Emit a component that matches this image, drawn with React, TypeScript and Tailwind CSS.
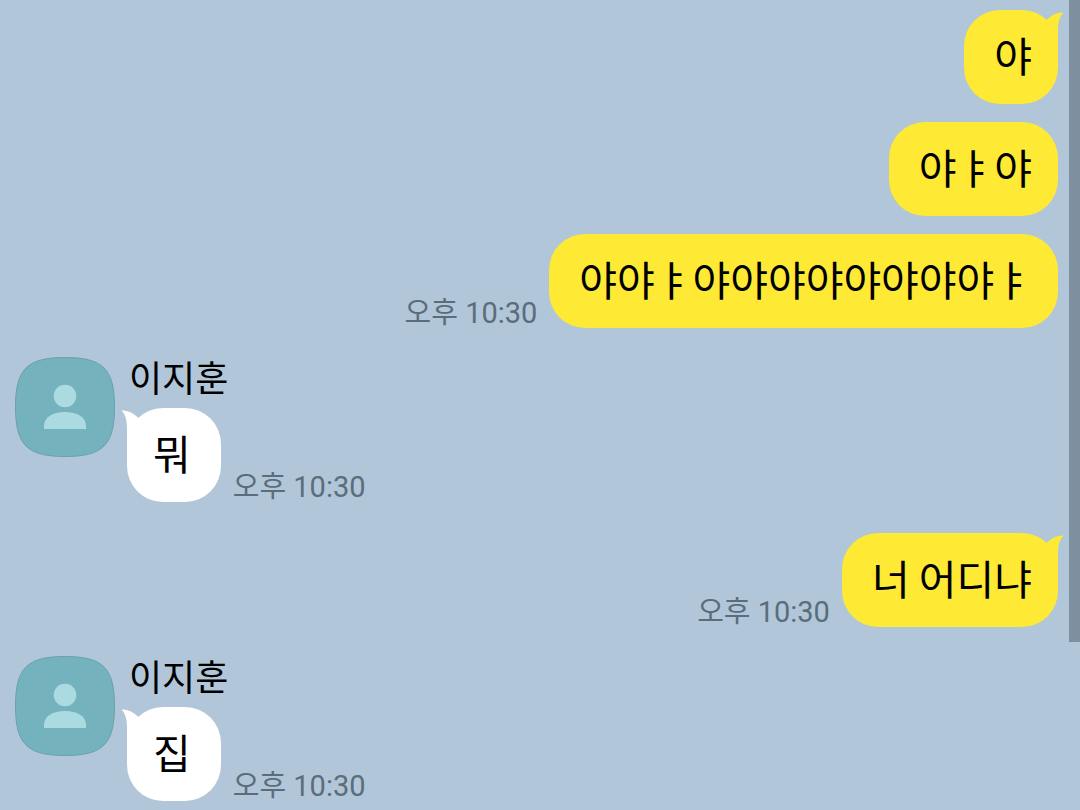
type Message = {
  text: string;
  time?: string;
};

type MessageGroup = {
  id: number;
  sender: string | null;
  messages: Message[];
};

const GROUPS: MessageGroup[] = [
  {
    id: 1,
    sender: null,
    messages: [
      { text: "야" },
      { text: "야ㅑ야" },
      { text: "야야ㅑ야야야야야야야야ㅑ", time: "오후 10:30" },
    ],
  },
  { id: 2, sender: "이지훈", messages: [{ text: "뭐", time: "오후 10:30" }] },
  { id: 3, sender: null, messages: [{ text: "너 어디냐", time: "오후 10:30" }] },
  { id: 4, sender: "이지훈", messages: [{ text: "집", time: "오후 10:30" }] },
];

function Avatar() {
  return (
    <svg viewBox="0 0 100 100" className="size-[100px] shrink-0" aria-hidden="true">
      <path
        d="M50 .5C88 .5 99.5 12 99.5 50S88 99.5 50 99.5.5 88 .5 50 12 .5 50 .5Z"
        fill="#74b3be"
        stroke="#6ba0ad"
        strokeWidth="1"
      />
      <circle cx="50" cy="39" r="11.3" fill="#abdbe0" />
      <path d="M29 72V69C29 60 38 55 50 55s21 5 21 14v3Z" fill="#abdbe0" />
    </svg>
  );
}

function Tail({ mine }: { mine: boolean }) {
  return (
    <svg
      viewBox="0 0 24 36"
      className={
        mine
          ? "absolute top-0 -right-1.5 w-6 h-9 text-[#fee934]"
          : "absolute top-0 -left-1.5 w-6 h-9 -scale-x-100 text-white"
      }
      aria-hidden="true"
    >
      <path d="M4 14L7 9.500C12 5 17 2.500 23.500 2.500C20 6 18 12 18 20V36L8 24Z" fill="currentColor" />
    </svg>
  );
}

function Bubble({ message, mine, tail }: { message: Message; mine: boolean; tail: boolean }) {
  return (
    <div className={`flex items-end gap-3 ${mine ? "flex-row-reverse" : ""}`}>
      <div
        className={`relative rounded-[36px] pt-[14px] pb-[20px] text-[41px] leading-[60px] text-black ${
          mine ? "bg-[#fee934] pl-[30px] pr-[26px]" : "bg-white pl-[26px] pr-[30px]"
        }`}
      >
        {tail && <Tail mine={mine} />}
        <p>{message.text}</p>
      </div>
      {message.time && (
        <time className="shrink-0 font-[Roboto,'Noto_Sans_CJK_KR',sans-serif] text-[29px] leading-[30px] text-[#5b6d7a]">
          {message.time}
        </time>
      )}
    </div>
  );
}

function Group({ group }: { group: MessageGroup }) {
  const mine = group.sender === null;
  const bubbles = group.messages.map((message, i) => (
    <Bubble key={i} message={message} mine={mine} tail={i === 0} />
  ));

  if (mine) {
    return <li className="flex flex-col items-end gap-[18px] pr-[22px]">{bubbles}</li>;
  }

  return (
    <li className="flex items-start gap-3 pl-[15px] pb-0.5">
      <Avatar />
      <div className="flex flex-col items-start gap-[13px]">
        <h2 className="pl-[2px] text-[36px] leading-[38px] text-black">{group.sender}</h2>
        {bubbles}
      </div>
    </li>
  );
}

export default function App() {
  return (
    <main className="relative min-h-screen bg-[#b1c6d9] font-['Noto_Sans_CJK_KR',sans-serif]">
      <ol className="flex flex-col gap-[29px] pt-2.5 pb-1.5">
        {GROUPS.map((group) => (
          <Group key={group.id} group={group} />
        ))}
      </ol>
      <div className="absolute top-0 right-0 h-[642px] w-[11px] bg-[#7e909f]" />
    </main>
  );
}
